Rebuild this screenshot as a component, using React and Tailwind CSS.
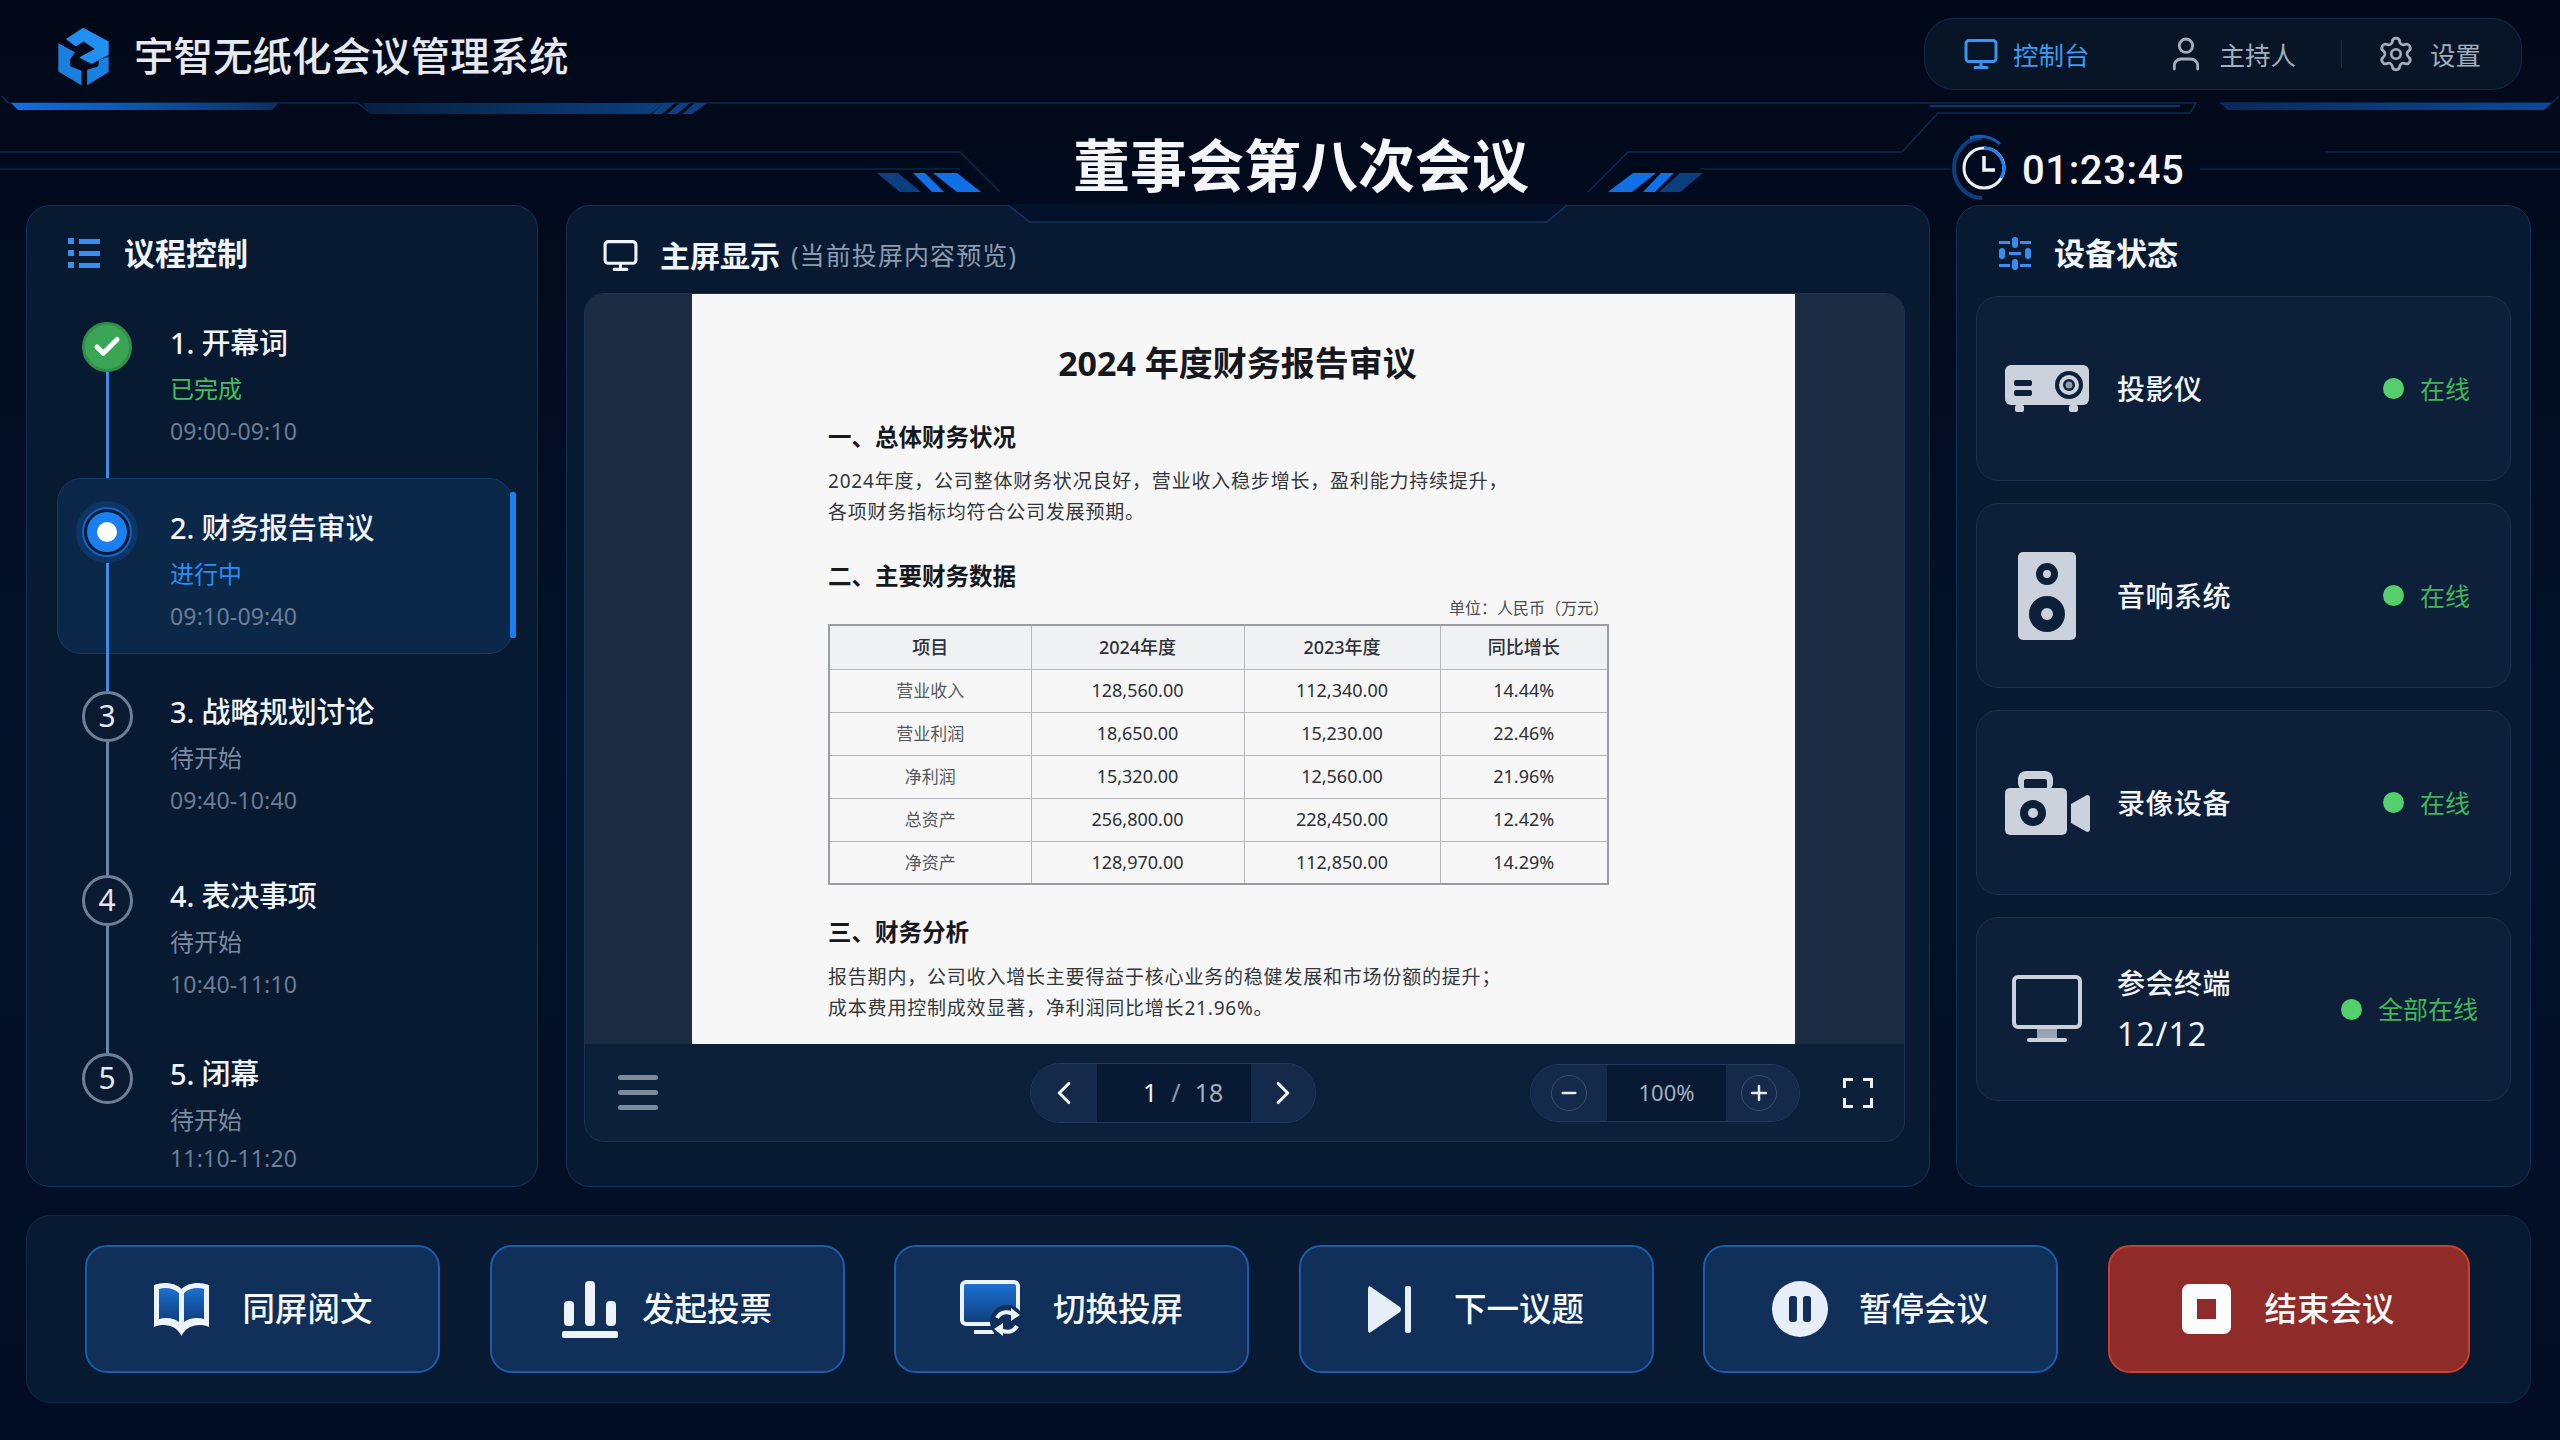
import { Monitor, User, Settings, ChevronLeft, ChevronRight, Minus, Plus, Check } from 'lucide-react';

const steps = [
    { no: '1', title: '1. 开幕词', status: '已完成', time: '09:00-09:10', state: 'done', h: 'h-[185px]' },
    { no: '2', title: '2. 财务报告审议', status: '进行中', time: '09:10-09:40', state: 'active', h: 'h-[184px]' },
    { no: '3', title: '3. 战略规划讨论', status: '待开始', time: '09:40-10:40', state: 'todo', h: 'h-[184px]' },
    { no: '4', title: '4. 表决事项', status: '待开始', time: '10:40-11:10', state: 'todo', h: 'h-[178px]' },
    { no: '5', title: '5. 闭幕', status: '待开始', time: '11:10-11:20', state: 'last', h: 'h-[135px]' },
];

const rows = [
    ['营业收入', '128,560.00', '112,340.00', '14.44%'],
    ['营业利润', '18,650.00', '15,230.00', '22.46%'],
    ['净利润', '15,320.00', '12,560.00', '21.96%'],
    ['总资产', '256,800.00', '228,450.00', '12.42%'],
    ['净资产', '128,970.00', '112,850.00', '14.29%'],
];

function Logo() {
    return (
        <svg width="53" height="59" viewBox="52 36 158 178">
            <path d="M78 72 L130 38 L207 80 V120 L155 148 L118 128 L165 102 L132 80 L108 95 Z" fill="#2190f0" />
            <path d="M55 85 L105 112 L90 135 L92 155 L125 168 V212 L55 170 Z" fill="#1a80e0" />
            <path d="M207 125 V172 L142 212 V165 L175 155 L178 135 Z" fill="#1a80e0" />
        </svg>
    );
}

function ListGlyph() {
    return (
        <svg width="32" height="30" viewBox="0 0 32 30" fill="#3a8df0">
            <rect x="0" y="0" width="6" height="6" />
            <rect x="11" y="1" width="21" height="5" />
            <rect x="0" y="12" width="6" height="6" />
            <rect x="11" y="13" width="21" height="5" />
            <rect x="0" y="24" width="6" height="6" />
            <rect x="11" y="25" width="21" height="5" />
        </svg>
    );
}

function SliderGlyph() {
    return (
        <svg width="32" height="33" viewBox="0 0 32 33" fill="#3a8df0">
            <rect x="0" y="4" width="11" height="3" />
            <rect x="21" y="4" width="11" height="3" />
            <rect x="13" y="0" width="6" height="11" rx="3" />
            <rect x="10" y="15" width="12" height="3" />
            <rect x="0" y="11" width="6" height="11" rx="3" />
            <rect x="26" y="11" width="6" height="11" rx="3" />
            <rect x="0" y="27" width="11" height="3" />
            <rect x="21" y="27" width="11" height="3" />
            <rect x="13" y="22" width="6" height="11" rx="3" />
        </svg>
    );
}

function Projector() {
    return (
        <svg width="84" height="48" viewBox="0 0 84 48">
            <rect x="0" y="0" width="84" height="40" rx="6" fill="#ccd2dc" />
            <rect x="10" y="40" width="9" height="7" rx="2" fill="#ccd2dc" />
            <rect x="64" y="40" width="9" height="7" rx="2" fill="#ccd2dc" />
            <rect x="9" y="15" width="18" height="6" rx="2" fill="#0d2039" />
            <rect x="9" y="25" width="18" height="6" rx="2" fill="#0d2039" />
            <circle cx="64" cy="20" r="14" fill="#0d2039" />
            <circle cx="64" cy="20" r="10" fill="#ccd2dc" />
            <circle cx="64" cy="20" r="6" fill="#0d2039" />
            <circle cx="64" cy="20" r="3.5" fill="#8f9bab" />
        </svg>
    );
}

function Speaker() {
    return (
        <svg width="58" height="88" viewBox="0 0 58 88">
            <rect width="58" height="88" rx="5" fill="#ccd2dc" />
            <circle cx="29" cy="22" r="11" fill="#0d2039" />
            <circle cx="29" cy="22" r="4" fill="#ccd2dc" />
            <circle cx="29" cy="62" r="18" fill="#0d2039" />
            <circle cx="29" cy="62" r="6" fill="#ccd2dc" />
        </svg>
    );
}

function Camera() {
    return (
        <svg width="85" height="64" viewBox="0 0 85 64">
            <rect x="13" y="0" width="35" height="20" rx="8" fill="#ccd2dc" />
            <rect x="19" y="8" width="23" height="10" rx="2" fill="#0d2039" />
            <rect x="0" y="17" width="62" height="47" rx="5" fill="#ccd2dc" />
            <circle cx="28" cy="42" r="13" fill="#0d2039" />
            <circle cx="28" cy="42" r="5" fill="#ccd2dc" />
            <path d="M66 33 L82 24 Q85 24 85 27 V58 Q85 61 82 61 L66 52 Z" fill="#ccd2dc" />
        </svg>
    );
}

function Terminal() {
    return (
        <svg width="70" height="68" viewBox="0 0 70 68">
            <rect x="2" y="2" width="66" height="50" rx="4" fill="#0d2039" stroke="#ccd2dc" strokeWidth="4" />
            <rect x="25" y="54" width="20" height="9" fill="#98a4b6" />
            <rect x="15" y="63" width="40" height="4" rx="2" fill="#ccd2dc" />
        </svg>
    );
}

function Book() {
    return (
        <svg width="59" height="56" viewBox="0 0 59 56">
            <defs>
                <linearGradient id="bookFill" x1="0" y1="0" x2="0" y2="1">
                    <stop offset="0" stopColor="#1a6fd2" />
                    <stop offset="1" stopColor="#103d78" />
                </linearGradient>
            </defs>
            <path d="M29.5 8 C24 2 12 0 2 4 V46 C12 42 24 44 29.5 55 C35 44 47 42 57 46 V4 C47 0 35 2 29.5 8 Z" fill="#eef3fa" />
            <path d="M27 12 C22 7 13 6 7 8 V38 C14 36 22 37 27 41 Z" fill="url(#bookFill)" />
            <path d="M32 12 C37 7 46 6 52 8 V38 C45 36 37 37 32 41 Z" fill="url(#bookFill)" />
        </svg>
    );
}

function Bars() {
    return (
        <svg width="56" height="57" viewBox="0 0 56 57" fill="#eef3fa">
            <rect x="2" y="20" width="10" height="25" rx="4" />
            <rect x="23" y="0" width="10" height="45" rx="4" />
            <rect x="44" y="20" width="10" height="25" rx="4" />
            <rect x="0" y="50" width="56" height="7" rx="2" />
        </svg>
    );
}

function SwitchScreen() {
    return (
        <svg width="62" height="58" viewBox="0 0 62 58" fill="none">
            <defs>
                <linearGradient id="screenFill" x1="0" y1="0" x2="0" y2="1">
                    <stop offset="0" stopColor="#1c74d8" />
                    <stop offset="1" stopColor="#103d78" />
                </linearGradient>
            </defs>
            <rect x="2" y="2" width="56" height="42" rx="4" fill="url(#screenFill)" stroke="#eef3fa" strokeWidth="4" />
            <rect x="14" y="50" width="20" height="4" fill="#eef3fa" />
            <circle cx="47" cy="42" r="17" fill="#103059" />
            <path d="M37 38 A11 11 0 0 1 55 36" stroke="#eef3fa" strokeWidth="4" />
            <path d="M57 46 A11 11 0 0 1 39 48" stroke="#eef3fa" strokeWidth="4" />
            <path d="M51 28 V41 L60 35 Z M43 56 V43 L34 49 Z" fill="#eef3fa" />
        </svg>
    );
}

function NextGlyph() {
    return (
        <svg width="43" height="47" viewBox="0 0 43 47" fill="#e8eef8">
            <path d="M0 3 Q0 -1 3 1 L32 21 Q34 23.5 32 26 L3 46 Q0 48 0 44 Z" />
            <rect x="37" y="0" width="6" height="47" rx="2" />
        </svg>
    );
}

function PauseGlyph() {
    return (
        <svg width="56" height="56" viewBox="0 0 56 56">
            <circle cx="28" cy="28" r="28" fill="#e8eef8" />
            <rect x="17" y="15" width="8" height="26" rx="3" fill="#103059" />
            <rect x="31" y="15" width="8" height="26" rx="3" fill="#103059" />
        </svg>
    );
}

function StopGlyph() {
    return (
        <svg width="49" height="50" viewBox="0 0 49 50">
            <rect width="49" height="50" rx="7" fill="#fdfdfd" />
            <rect x="15" y="15" width="19" height="20" fill="#8f2c2a" />
        </svg>
    );
}

// header lines and the notch in the main panel's top edge
function Decor() {
    return (
        <svg className="absolute left-0 top-0 z-20 pointer-events-none" width="2560" height="240" viewBox="0 0 2560 240" fill="none">
            <defs>
                <linearGradient id="barL" x1="0" y1="0" x2="1" y2="0">
                    <stop offset="0" stopColor="#0f6fe0" />
                    <stop offset="0.35" stopColor="#0f5cb8" />
                    <stop offset="1" stopColor="#0b2f5e" />
                </linearGradient>
                <linearGradient id="barM" x1="0" y1="0" x2="1" y2="0">
                    <stop offset="0" stopColor="#06203f" />
                    <stop offset="1" stopColor="#0b3f80" />
                </linearGradient>
                <linearGradient id="barR" x1="0" y1="0" x2="1" y2="0">
                    <stop offset="0" stopColor="#07295a" />
                    <stop offset="1" stopColor="#0b4a96" />
                </linearGradient>
                <linearGradient id="glow" x1="0" y1="0" x2="1" y2="0">
                    <stop offset="0" stopColor="#0f6fe0" stopOpacity="0" />
                    <stop offset="0.5" stopColor="#0f6fe0" />
                    <stop offset="1" stopColor="#0f6fe0" stopOpacity="0" />
                </linearGradient>
                <linearGradient id="tailL" x1="0" y1="0" x2="1" y2="0">
                    <stop offset="0" stopColor="#0f6fe0" stopOpacity="0" />
                    <stop offset="1" stopColor="#0f6fe0" />
                </linearGradient>
                <linearGradient id="tailR" x1="0" y1="0" x2="1" y2="0">
                    <stop offset="0" stopColor="#0f6fe0" />
                    <stop offset="1" stopColor="#0f6fe0" stopOpacity="0" />
                </linearGradient>
            </defs>
            <path d="M2 96 L8 103 H358 L370 113 H650 L664 103 H2196 L2190 113 H1938 L1902 152 H1628 L1588 192" stroke="#0b2a50" strokeWidth="1.5" />
            <path d="M2220 103 H2552 L2559 96" stroke="#0b2a50" strokeWidth="1.5" />
            <path d="M11 103 H279 L272 110 H18 Z" fill="url(#barL)" />
            <path d="M363 103 H664 L650 114 H370 Z" fill="url(#barM)" />
            <path d="M664 103 H675 L662 114 H652 Z M680 103 H690 L677 114 H667 Z M695 103 H707 L692 114 H682 Z" fill="#0b3f80" />
            <path d="M2220 103 H2552 L2544 110 H2228 Z" fill="url(#barR)" />
            <path d="M1930 106 H2180" stroke="#0b3566" strokeWidth="2" />
            <path d="M0 152 H960 L1000 192" stroke="#0b2a50" strokeWidth="1.5" />
            <path d="M510 151.5 H830" stroke="url(#glow)" strokeWidth="3" />
            <path d="M0 169 H960" stroke="#0a2444" strokeWidth="1.5" />
            <path d="M1700 169 H1950 M2200 169 H2560 M2325 152 H2560" stroke="#0a2444" strokeWidth="1.5" />
            <path d="M816 173 H880" stroke="url(#tailL)" strokeWidth="2" />
            <path d="M1690 173 H1760" stroke="url(#tailR)" strokeWidth="2" />
            <path d="M877 173 H898 L921 192 H900 Z" fill="#0b3f80" />
            <path d="M913 173 H925 L944 192 H932 Z" fill="#1170e6" />
            <path d="M933 173 H957 L981 192 H957 Z" fill="#1170e6" />
            <path d="M1633 173 H1656 L1632 192 H1608 Z" fill="#1170e6" />
            <path d="M1661 173 H1674 L1655 192 H1643 Z" fill="#1170e6" />
            <path d="M1680 173 H1703 L1680 192 H1659 Z" fill="#0b3f80" />
            <path d="M1008 204 L1030 222 H1547 L1567 204 Z" fill="#03122a" />
            <path d="M1008 205 L1030 222 H1547 L1567 205" stroke="#10345f" strokeWidth="1.5" />
        </svg>
    );
}

function ClockBadge() {
    return (
        <svg width="62" height="68" viewBox="0 0 62 68" fill="none">
            <path d="M32 4 A28 30 0 1 0 32 64" stroke="#0b3f80" strokeWidth="4" />
            <path d="M20 4 A30 30 0 0 1 50 10" stroke="#0f5cb8" strokeWidth="3" />
            <circle cx="34" cy="34" r="20" stroke="#eef2f8" strokeWidth="3" />
            <path d="M34 14 A20 20 0 0 1 51 44" stroke="#1a7ff0" strokeWidth="3" />
            <path d="M34 22 V36 H45" stroke="#f1f5fb" strokeWidth="3.5" />
        </svg>
    );
}

function StepDot({ step }) {
    if (step.state === 'done') {
        return (
            <div className="w-[50px] h-[50px] rounded-full bg-[#3aa655] border-[3px] border-[#2f8f49] flex items-center justify-center">
                <Check size={30} strokeWidth={4} className="text-white" />
            </div>
        );
    }
    if (step.state === 'active') {
        return (
            <div className="w-[62px] h-[62px] rounded-full bg-[#0c3566] flex items-center justify-center">
                <div className="w-[50px] h-[50px] rounded-full bg-[#061a35] border-2 border-[#1264c4] flex items-center justify-center">
                    <div className="w-[40px] h-[40px] rounded-full bg-[#1a7ff0] flex items-center justify-center">
                        <div className="w-[20px] h-[20px] rounded-full bg-white"></div>
                    </div>
                </div>
            </div>
        );
    }
    return (
        <div className="w-[51px] h-[51px] rounded-full bg-[#0a1a30] border-[3px] border-[#6f7f97] flex items-center justify-center text-[30px] leading-none text-[#e2e7ef]">
            {step.no}
        </div>
    );
}

function Step({ step, next }) {
    const active = step.state === 'active';
    const statusColor = step.state === 'done' ? 'text-[#43c05c]' : active ? 'text-[#2a8cf0]' : 'text-[#7c899d]';
    return (
        <div className={`relative flex ${step.h}`}>
            {active && (
                <>
                    <div className="absolute left-[-19px] top-[-23px] w-[456px] h-[176px] rounded-[24px] bg-[#0c2849] border border-[#113a6c]"></div>
                    <div className="absolute left-[434px] top-[-9px] w-[6px] h-[146px] rounded-[2px] bg-[#1a7ff0]"></div>
                </>
            )}
            <div className="relative w-[62px] flex flex-col items-center">
                <div className="relative z-10 h-[62px] flex items-center justify-center">
                    <StepDot step={step} />
                </div>
                {next && (
                    <div className={`flex-1 -my-[6px] w-[3px] ${next === 'blue' ? 'bg-[#3a8ee6]' : 'bg-[#6f84a0]'}`}></div>
                )}
            </div>
            <div className="relative ml-[32px] pt-[7px]">
                <div className="text-[29px] leading-[40px] tracking-[-0.2px] font-medium text-[#f1f5fb]">{step.title}</div>
                <div className={`mt-[9px] text-[24px] leading-[34px] ${statusColor}`}>{step.status}</div>
                <div className={`${step.state === 'last' ? 'mt-[4px]' : 'mt-[8px]'} text-[23px] leading-[34px] tracking-[0.2px] text-[#6d7d94]`}>{step.time}</div>
            </div>
        </div>
    );
}

function DeviceCard({ icon, name, sub, status, last }) {
    return (
        <div className={`flex items-center rounded-[22px] border border-[#1a2f4c] bg-[#0e2039] pl-[27px] ${last ? 'pr-[32px] h-[184px]' : 'pr-[40px] h-[185px]'}`}>
            <div className="w-[86px] flex items-center justify-center shrink-0">{icon}</div>
            <div className="ml-[27px] flex-1">
                <div className="text-[28px] leading-[38px] tracking-[0.5px] font-medium text-[#f1f5fb]">{name}</div>
                {sub && <div className="mt-[12px] text-[32px] leading-[40px] tracking-[1px] text-[#f1f5fb]">{sub}</div>}
            </div>
            <div className="flex items-center gap-[16px]">
                <div className="w-[21px] h-[21px] rounded-full bg-[#54cf6b]"></div>
                <div className="text-[25px] leading-[34px] text-[#3fb658]">{status}</div>
            </div>
        </div>
    );
}

function ActionButton({ icon, label, danger, width, gap }) {
    return (
        <div className={`${width} h-[128px] rounded-[22px] border-2 flex items-center justify-center ${gap} ${danger ? 'bg-[#8f2c2a] border-[#c8402f]' : 'bg-[#103059] border-[#1a5dac]'}`}>
            {icon}
            <span className="text-[32.5px] leading-none font-medium text-[#f6f8fc]">{label}</span>
        </div>
    );
}

export default function App() {
    return (
        <div className="relative w-[2560px] h-[1440px] overflow-hidden bg-gradient-to-b from-[#010818] via-[#03122a] to-[#020d24] font-['Noto_Sans','Noto_Sans_CJK_SC',sans-serif] text-white">
            <Decor />

            {/* Header */}
            <header className="relative z-30 h-[103px] flex items-start justify-between pl-[57px] pr-[38px]">
                <div className="flex items-center gap-[24px] pt-[27px]">
                    <Logo />
                    <h1 className="text-[39.5px] leading-[59px] font-medium text-[#e6e9f0]">宇智无纸化会议管理系统</h1>
                </div>
                <nav className="mt-[18px] w-[598px] h-[72px] rounded-[30px] border border-[#14294a] bg-[#071527] flex items-center pl-[38px] text-[25.5px]">
                    <Monitor size={36} className="text-[#3a95ee]" />
                    <span className="ml-[14px] pt-[3px] text-[#3a9cf0]">控制台</span>
                    <User size={40} strokeWidth={1.7} className="ml-[76px] text-[#a3aebd]" />
                    <span className="ml-[14px] pt-[3px] text-[#a3aebd]">主持人</span>
                    <div className="ml-[45px] w-px h-[28px] bg-[#1b2f4d]"></div>
                    <Settings size={38} strokeWidth={1.7} className="ml-[35px] text-[#a3aebd]" />
                    <span className="ml-[15px] pt-[3px] text-[#a3aebd]">设置</span>
                </nav>
            </header>

            {/* Meeting title + timer */}
            <div className="relative z-30 h-[102px] pl-[40px] grid grid-cols-[minmax(0,1fr)_auto_minmax(0,1fr)]">
                <div></div>
                <h2 className="pt-[26px] text-[57px] leading-[72px] font-bold text-[#f4f6fa] w-[454px] text-center whitespace-nowrap">董事会第八次会议</h2>
                <div className="pl-[423px] pt-[31px] flex items-start gap-[10px] whitespace-nowrap">
                    <ClockBadge />
                    <span className="font-['Roboto',sans-serif] text-[40px] leading-[74px] font-medium tracking-[0.6px] text-[#f4f6fa]">01:23:45</span>
                </div>
            </div>

            {/* Main panels */}
            <main className="relative flex h-[982px] pl-[26px] gap-[28px]">
                <section className="w-[512px] rounded-[24px] border border-[#10305a] bg-[#071a32] pl-[49px]">
                    <div className="h-[110px] flex items-center gap-[24px] -ml-[8px] pb-[16px]">
                        <ListGlyph />
                        <span className="text-[31px] font-bold text-[#f1f5fb]">议程控制</span>
                    </div>
                    {steps.map((step, i) => (
                        <Step key={step.no} step={step} next={i < 2 ? 'blue' : i < 4 ? 'gray' : null} />
                    ))}
                </section>

                <section className="w-[1364px] rounded-[24px] border border-[#10305a] bg-[#071a32] pl-[17px] pr-[24px]">
                    <div className="h-[87px] flex items-center pl-[18px] pt-[12px]">
                        <Monitor size={37} strokeWidth={2} className="text-[#f1f5fb]" />
                        <span className="ml-[21px] text-[30px] font-bold text-[#f1f5fb]">主屏显示</span>
                        <span className="ml-[11px] text-[25px] tracking-[1.1px] text-[#8b9ab0]">(当前投屏内容预览)</span>
                    </div>
                    <div className="h-[849px] rounded-[20px] border border-[#1b3150] overflow-hidden bg-[#0c203a] flex flex-col">
                        <div className="h-[750px] bg-[#1c2c42] pl-[107px]">
                            <div className="w-[1103px] h-full bg-[#f7f7f7] pl-[136px] text-[#16181d]">
                                <div className="pt-[45px] pr-[148px] text-[34px] leading-[48px] font-bold text-center">2024 年度财务报告审议</div>
                                <div className="mt-[33px] text-[23.5px] leading-[34px] font-bold">一、总体财务状况</div>
                                <p className="mt-[12px] text-[19px] leading-[31px] tracking-[0.8px] text-[#34373d]">
                                    2024年度，公司整体财务状况良好，营业收入稳步增长，盈利能力持续提升，<br />
                                    各项财务指标均符合公司发展预期。
                                </p>
                                <div className="mt-[31px] text-[23.5px] leading-[34px] font-bold">二、主要财务数据</div>
                                <div className="w-[781px] mt-[5px] text-right text-[16px] leading-[20px] text-[#4a4d53]">单位：人民币（万元）</div>
                                <table className="mt-[6px] w-[781px] table-fixed border-collapse border-2 border-[#9a9da2] text-center text-[#2c3038]">
                                    <thead>
                                        <tr className="h-[44px] bg-[#f0f1f3] text-[18px]">
                                            <th className="w-[202px] font-medium border border-[#b5b7bb]">项目</th>
                                            <th className="w-[213px] font-medium border border-[#b5b7bb]">2024年度</th>
                                            <th className="w-[196px] font-medium border border-[#b5b7bb]">2023年度</th>
                                            <th className="font-medium border border-[#b5b7bb]">同比增长</th>
                                        </tr>
                                    </thead>
                                    <tbody>
                                        {rows.map((row) => (
                                            <tr key={row[0]} className="h-[43px] text-[18px]">
                                                <td className="text-[17px] text-[#55585e] border border-[#b5b7bb]">{row[0]}</td>
                                                <td className="border border-[#b5b7bb]">{row[1]}</td>
                                                <td className="border border-[#b5b7bb]">{row[2]}</td>
                                                <td className="border border-[#b5b7bb]">{row[3]}</td>
                                            </tr>
                                        ))}
                                    </tbody>
                                </table>
                                <div className="mt-[30px] text-[23.5px] leading-[34px] font-bold">三、财务分析</div>
                                <p className="mt-[13px] text-[19px] leading-[31px] tracking-[0.8px] text-[#34373d]">
                                    报告期内，公司收入增长主要得益于核心业务的稳健发展和市场份额的提升；<br />
                                    成本费用控制成效显著，净利润同比增长21.96%。
                                </p>
                            </div>
                        </div>
                        <div className="flex-1 flex items-center pl-[33px]">
                            <div className="flex flex-col gap-[10px]">
                                <div className="w-[40px] h-[5px] rounded-full bg-[#7d8a9c]"></div>
                                <div className="w-[40px] h-[5px] rounded-full bg-[#7d8a9c]"></div>
                                <div className="w-[40px] h-[5px] rounded-full bg-[#7d8a9c]"></div>
                            </div>
                            <div className="ml-[372px] w-[286px] h-[60px] rounded-full border border-[#22395a] overflow-hidden flex">
                                <div className="w-[66px] bg-[#15294a] flex items-center justify-center"><ChevronLeft size={38} strokeWidth={2} className="text-[#f1f5fb]" /></div>
                                <div className="flex-1 bg-[#081a33] flex items-center pl-[46px] gap-[14px] text-[25px]">
                                    <span className="text-[#f1f5fb]">1</span>
                                    <span className="text-[#8b9ab0]">/</span>
                                    <span className="text-[#a3b0c2]">18</span>
                                </div>
                                <div className="w-[64px] bg-[#15294a] flex items-center justify-center"><ChevronRight size={38} strokeWidth={2} className="text-[#f1f5fb]" /></div>
                            </div>
                            <div className="ml-[214px] w-[270px] h-[58px] rounded-full border border-[#22395a] overflow-hidden flex">
                                <div className="w-[76px] bg-[#15294a] flex items-center justify-center">
                                    <div className="w-[36px] h-[36px] rounded-full border border-[#3a4d6b] flex items-center justify-center"><Minus size={22} strokeWidth={2.5} className="text-[#e6ebf2]" /></div>
                                </div>
                                <div className="flex-1 bg-[#081a33] flex items-center justify-center text-[22px] text-[#a3b0c2]">100%</div>
                                <div className="w-[73px] pr-[8px] bg-[#15294a] flex items-center justify-center">
                                    <div className="w-[36px] h-[36px] rounded-full border border-[#3a4d6b] flex items-center justify-center"><Plus size={24} strokeWidth={2.5} className="text-[#e6ebf2]" /></div>
                                </div>
                            </div>
                            <svg className="ml-[43px]" width="30" height="30" viewBox="0 0 30 30" fill="none" stroke="#eef2f8" strokeWidth="3">
                                <path d="M1.5 10 V1.5 H10 M20 1.5 H28.5 V10 M28.5 20 V28.5 H20 M10 28.5 H1.5 V20" />
                            </svg>
                        </div>
                    </div>
                </section>

                <section className="w-[575px] -ml-[2px] rounded-[24px] border border-[#10305a] bg-[#071a32] px-[19px]">
                    <div className="h-[90px] flex items-center gap-[23px] pl-[23px] pt-[4px]">
                        <SliderGlyph />
                        <span className="text-[31px] font-bold text-[#f1f5fb]">设备状态</span>
                    </div>
                    <div className="flex flex-col gap-[22px]">
                        <DeviceCard icon={<Projector />} name="投影仪" status="在线" />
                        <DeviceCard icon={<Speaker />} name="音响系统" status="在线" />
                        <DeviceCard icon={<Camera />} name="录像设备" status="在线" />
                        <DeviceCard icon={<Terminal />} name="参会终端" sub="12/12" status="全部在线" last />
                    </div>
                </section>
            </main>

            {/* Bottom actions */}
            <footer className="mt-[28px] ml-[26px] w-[2505px] h-[188px] rounded-[24px] border border-[#0e2747] bg-[#071a32] pl-[58px] flex items-center gap-[49.5px]">
                <ActionButton width="w-[355px]" gap="gap-[31px]" icon={<Book />} label="同屏阅文" />
                <ActionButton width="w-[355px]" gap="gap-[24px]" icon={<Bars />} label="发起投票" />
                <ActionButton width="w-[355px]" gap="gap-[31px]" icon={<SwitchScreen />} label="切换投屏" />
                <ActionButton width="w-[355px]" gap="gap-[43px]" icon={<NextGlyph />} label="下一议题" />
                <ActionButton width="w-[355px]" gap="gap-[31px]" icon={<PauseGlyph />} label="暂停会议" />
                <ActionButton width="w-[362px]" gap="gap-[33px]" icon={<StopGlyph />} label="结束会议" danger />
            </footer>
        </div>
    );
}
